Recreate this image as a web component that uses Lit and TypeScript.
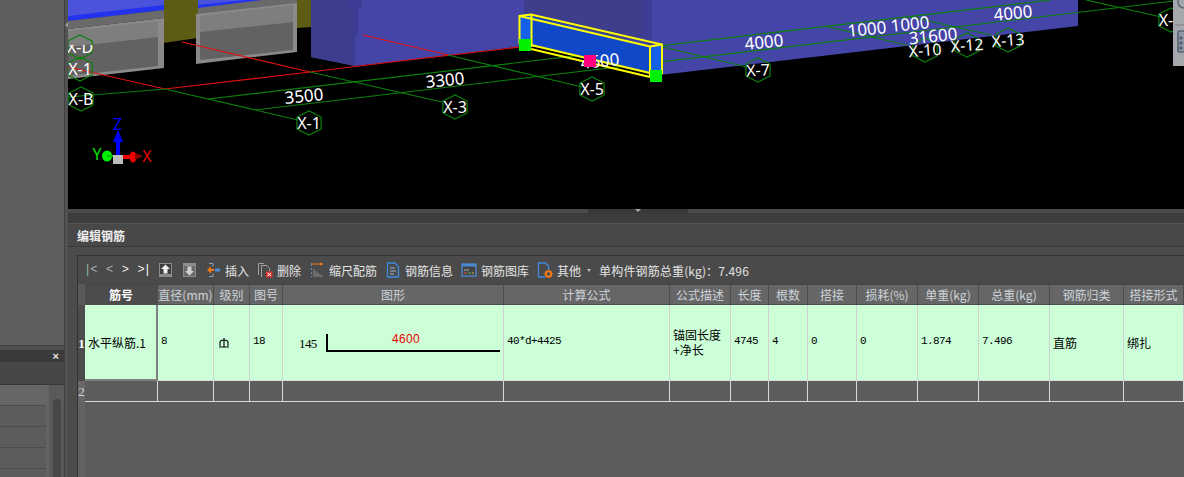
import { LitElement, html, svg, css } from 'lit';
import { customElement } from 'lit/decorators.js';

// grid-template for these widths lives in the .row rule
const COLUMNS = ['筋号', '直径(mm)', '级别', '图号', '图形', '计算公式', '公式描述', '长度', '根数', '搭接', '损耗(%)', '单重(kg)', '总重(kg)', '钢筋归类', '搭接形式'];

const GREEN_LINES = [
  [68, 97, 165, 89], [165, 89, 298, 120], [310, 72, 442, 102], [448, 55, 582, 87], [663, 47, 747, 67],
  [208, 99, 1051, 0], [255, 110, 1174, 1], [824, 26, 907, 45], [907, 16, 991, 35], [1086, 0, 1161, 17],
];

const BUBBLES = [
  { x: 80, y: 69, t: 'X-1', a: 0 }, { x: 81, y: 99, t: 'X-B', a: 0 },
  { x: 309, y: 123, t: 'X-1', a: 0 }, { x: 455, y: 107, t: 'X-3', a: 0 }, { x: 592, y: 89, t: 'X-5', a: 0 },
  { x: 758, y: 70, t: 'X-7', a: -3 }, { x: 925, y: 50, t: 'X-10', a: -4 }, { x: 967, y: 45, t: 'X-12', a: -4 },
  { x: 1008, y: 40, t: 'X-13', a: -4 },
];

const DIMENSIONS = [
  { x: 304, y: 96, t: '3500' }, { x: 445, y: 80, t: '3300' }, { x: 600, y: 61, t: '4600' },
  { x: 764, y: 42, t: '4000' }, { x: 867, y: 29, t: '1000' }, { x: 910, y: 24, t: '1000' },
  { x: 933, y: 36, t: '31600' }, { x: 1013, y: 13, t: '4000' },
];

const hexagon = (cx: number, cy: number) =>
  [0, 1, 2, 3, 4, 5]
    .map((i) => {
      const a = (Math.PI / 3) * i + Math.PI / 6;
      return `${(cx + 14 * Math.cos(a)).toFixed(1)},${(cy + 12 * Math.sin(a)).toFixed(1)}`;
    })
    .join(' ');

@customElement('app-root')
export class AppRoot extends LitElement {
  static styles = css`
    :host {
      display: flex;
      width: 100%;
      height: 477px;
      overflow: hidden;
      background: #4c4c4c;
      font-family: 'Noto Sans CJK SC', 'Noto Sans', sans-serif;
      font-size: 12px;
    }

    /* left dock */
    .side {
      width: 64px;
      flex: none;
      display: flex;
      flex-direction: column;
      background: #5c5c5c;
      border-right: 1px solid #404040;
      box-sizing: content-box;
    }
    .side-top {
      height: 345px;
      flex: none;
      border-bottom: 1px solid #434343;
      background: #5e5e5e;
    }
    .side-gap { height: 4px; flex: none; background: #505050; }
    .side-title {
      height: 12px;
      flex: none;
      background: #3b3b3b;
      display: flex;
      align-items: center;
      justify-content: flex-end;
      padding-right: 5px;
      color: #e8e8e8;
      font: bold 11px/12px 'Liberation Sans', sans-serif;
    }
    .side-tools {
      height: 22px;
      flex: none;
      background: #474747;
      border-bottom: 1px solid #363636;
    }
    .side-list { flex: 1; display: flex; min-height: 0; background: #5a5a5a; }
    .side-rows { width: 46px; flex: none; }
    .side-row { height: 20px; border-bottom: 1px solid #4c4c4c; background: #5c5c5c; }
    .side-row:first-child { background: #666; }
    .side-track { flex: 1; display: flex; justify-content: center; border-left: 3px solid #646464; }
    .side-thumb { width: 8px; height: 90px; margin-top: 14px; border-radius: 4px; background: #484848; }

    .sash { width: 3px; flex: none; background: #525252; display: flex; align-items: flex-start; }
    .sash i {
      display: block;
      margin-top: 22px;
      border: 3px solid transparent;
      border-right-color: #9a9a9a;
      border-left-width: 0;
    }

    /* main column */
    .main { flex: 1; min-width: 0; display: flex; flex-direction: column; }
    .scene { height: 209px; flex: none; display: block; background: #000; }
    .scene text { font-family: 'Noto Sans', sans-serif; fill: #fff; }
    .splitter { height: 4px; flex: none; background: #4a4a4a; display: flex; justify-content: center; }
    .grip {
      width: 100px;
      background: #383838;
      display: flex;
      justify-content: center;
      margin-left: 24px;
    }
    .grip i {
      display: block;
      border: 3px solid transparent;
      border-top-color: #a8a8a8;
      border-bottom-width: 0;
    }
    .band { height: 11px; flex: none; background: #3c3c3c; }
    .title {
      height: 22px;
      flex: none;
      background: #484848;
      border-top: 1px solid #555;
      border-bottom: 1px solid #383838;
      box-sizing: content-box;
      margin-top: -1px;
      padding-left: 9px;
      line-height: 24px;
      font-weight: 700;
      color: #eee;
    }
    .editor {
      flex: 1;
      min-height: 0;
      margin: 8px 0 0 9px;
      border-left: 1px solid #333;
      border-top: 1px solid #333;
      display: flex;
      flex-direction: column;
    }

    .toolbar {
      height: 28px;
      flex: none;
      display: flex;
      align-items: center;
      gap: 8px;
      padding-left: 6px;
      background: #4a4a4a;
      color: #e4e4e4;
      white-space: nowrap;
    }
    .nav {
      width: 66px;
      display: flex;
      justify-content: space-between;
      font: 12px/14px 'Liberation Mono', monospace;
      color: #e8e8e8;
    }
    .nav span { letter-spacing: -1px; }
    .nav b { font-weight: 400; color: #9fb89f; }
    .nav em { font-style: normal; color: #fff; }
    .nav .dim { color: #aaa; }
    .tool { display: flex; align-items: center; gap: 4px; }
    .tool svg { display: block; flex: none; }
    .caret {
      margin-left: 2px;
      border: 3px solid transparent;
      border-top-color: #bbb;
      border-bottom-width: 0;
      border-left-width: 2px;
      border-right-width: 2px;
    }
    .total { letter-spacing: 0.15px; }

    /* table */
    .table { flex: 1; min-height: 0; display: flex; background: #5c5c5c; }
    .gutter { width: 7px; flex: none; background: #626262; display: flex; flex-direction: column; }
    .g-head { height: 21px; background: #5a5a5a; }
    .g-one, .g-two {
      display: flex;
      align-items: center;
      justify-content: center;
      font: 13px/1 'Liberation Serif', serif;
    }
    .g-one { height: 76px; background: #4c4c4c; color: #fff; font-weight: 700; }
    .g-two { height: 21px; background: #686868; color: #c6d2de; }
    .rows { flex: 1; min-width: 0; }
    .row {
      display: grid;
      grid-template-columns: 73px 56px 36px 33px 221px 166px 61px 38px 39px 49px 61px 61px 71px 74px 1fr;
    }
    .head { height: 21px; }
    .head div {
      background: #666;
      border-right: 1px solid #4c4c4c;
      border-top: 1px solid #444;
      border-bottom: 1px solid #4c4c4c;
      box-sizing: border-box;
      text-align: center;
      line-height: 19px;
      color: #cdd4da;
      white-space: nowrap;
      overflow: hidden;
    }
    .head .current { background: #4c4c4c; color: #fff; font-weight: 700; }
    .data { height: 76px; background: #ccffd8; }
    .data > div {
      border-right: 1px solid #d0d0d0;
      border-bottom: 1px solid #d8d8d8;
      box-sizing: border-box;
      display: flex;
      align-items: center;
      padding: 0 0 2px 3px;
      color: #000;
      font: 11px/15px 'Liberation Mono', monospace;
      letter-spacing: -0.6px;
      min-width: 0;
    }
    .data > .cjk { font: 12px/15px 'Noto Sans CJK SC', sans-serif; letter-spacing: 0; padding-top: 1px; }
    .data > .selected {
      border: 2px solid #808080;
      border-top: 0;
      border-left: 0;
      padding-left: 3px;
      padding-bottom: 0;
      white-space: nowrap;
    }
    .data > .shape { padding: 0; }
    .data > .shape svg { display: block; }
    .data > .grade { padding: 0 0 0 4px; }
    .shape .bar-hook { font: 13px 'Liberation Serif', serif; }
    .shape .bar-main { font: 12px 'Liberation Sans', sans-serif; letter-spacing: 0.3px; }
    .empty { height: 21px; }
    .empty div { border-right: 1px solid #d8d8d8; border-bottom: 1px solid #d8d8d8; box-sizing: border-box; }
  `;

  private renderScene() {
    return html`<svg class="scene" width="1116" height="209" viewBox="68 0 1116 209">
      ${svg`
      <defs>
        <clipPath id="below-panel"><rect x="68" y="45" width="40" height="16"/></clipPath>
      </defs>
      <!-- building faces -->
      <polygon points="311,0 1078,0 1078,26 660,75 655,60 524,46 400,61 355,66 311,57" fill="#4545a8"/>
      <polygon points="311,0 355,0 355,66 311,57" fill="#3d3d90"/>
      <polygon points="524,0 645,0 645,38 524,46" fill="#3e3e8c"/>
      <polygon points="348,0 362,0 362,8 358,8 358,35 353,36 353,8 348,8" fill="#3c3c94"/>
      <polygon points="642,0 652,0 652,45 645,45" fill="#3d3d96"/>
      <polygon points="163,0 198,0 198,38 163,43" fill="#5e5b14"/>
      <polygon points="297,0 311,0 311,27 297,28" fill="#5e5b14"/>

      <!-- left wall panels -->
      <polygon points="68,0 164,0 164,10 68,21" fill="#4b52dc"/>
      <polygon points="68,16 164,5 164,10 68,21" fill="#2232ee"/>
      <polygon points="68,21 164,10 164,18 68,29" fill="#6a6a6a"/>
      <polygon points="68,29 164,18 164,68 68,79" fill="#8a8a8a"/>
      <polygon points="68,31 158,21 158,37 68,47" fill="#7e7e7e"/>
      <polygon points="68,47 158,37 158,66 68,76" fill="#626262"/>
      <polygon points="198,0 297,0 297,2 198,13" fill="#4b52dc"/>
      <polygon points="198,5 245,0 297,0 198,8" fill="#2232ee"/>
      <polygon points="198,8 262,0 297,0 297,6 198,17" fill="#6a6a6a"/>
      <polygon points="196,14 297,3 297,52 196,64" fill="#8a8a8a"/>
      <polygon points="200,16 293,5 293,22 200,32" fill="#7e7e7e"/>
      <polygon points="200,32 293,22 293,50 200,60" fill="#626262"/>

      <!-- grid lines -->
      <polyline points="68,67 165,89 310,72 400,61 607,37" fill="none" stroke="#e01010" stroke-width="1.2"/>
      <polyline points="182,42 310,72" fill="none" stroke="#e01010" stroke-width="1.2"/>
      <polyline points="363,35 448,55" fill="none" stroke="#e01010" stroke-width="1.2"/>
      ${GREEN_LINES.map(([a, b, c, d]) => svg`<line x1=${a} y1=${b} x2=${c} y2=${d} stroke="#0b800b" stroke-width="1.2"/>`)}
      <polygon points=${hexagon(80, 47)} fill="none" stroke="#0b800b" stroke-width="1.2"/>
      <text x="80" y="53" font-size="16" text-anchor="middle" clip-path="url(#below-panel)">X-D</text>
      ${BUBBLES.map((b) => svg`<polygon points=${hexagon(b.x, b.y)} fill="none" stroke="#0b800b" stroke-width="1.2"/>
        <text x=${b.x} y=${b.y + 6} font-size="16" text-anchor="middle" transform="rotate(${b.a} ${b.x} ${b.y})">${b.t}</text>`)}
      <polygon points=${hexagon(1171, 20)} fill="none" stroke="#0b800b" stroke-width="1.2"/>
      <text x="1166" y="26" font-size="16" text-anchor="middle">X-</text>

      <!-- selected beam -->
      <polygon points="532,16 650,46 650,74 532,46" fill="#1048c8"/>
      <polygon points="520,16 531,15 531,46 520,44" fill="#1560e8"/>
      <polygon points="650,46 661,45 661,74 650,74" fill="#1560e8"/>
      <g fill="none" stroke="#ffff00" stroke-width="2">
        <polyline points="519.5,44 519.5,16 531,14.5 662,44.5 662,74"/>
        <line x1="519.5" y1="16" x2="650" y2="46.5"/>
        <line x1="531.5" y1="15" x2="531.5" y2="47"/>
        <line x1="650" y1="46.5" x2="650" y2="76"/>
        <line x1="650" y1="46.5" x2="662" y2="44.5"/>
        <line x1="531" y1="45" x2="650" y2="73"/>
        <line x1="531" y1="49" x2="650" y2="77"/>
      </g>
      ${DIMENSIONS.map((d) => svg`<text x=${d.x} y=${d.y + 6} font-size="17" text-anchor="middle" transform="rotate(-6 ${d.x} ${d.y})">${d.t}</text>`)}
      <rect x="519" y="39" width="12" height="12" fill="#00f000"/>
      <rect x="650" y="70" width="12" height="12" fill="#00f000"/>
      <rect x="584" y="55" width="12" height="12" fill="#ff0080"/>

      <!-- axis triad -->
      <rect x="116" y="142" width="4" height="15" fill="#0000ff"/>
      <polygon points="113,142 118,130 123,142" fill="#0000ff"/>
      <ellipse cx="107" cy="156" rx="5" ry="5.5" fill="#00f000"/>
      <rect x="107" y="155" width="7" height="2" fill="#00c000"/>
      <rect x="122" y="155" width="12" height="4" fill="#f00000"/>
      <ellipse cx="133" cy="157" rx="3.5" ry="5.5" fill="#f00000"/>
      <polygon points="135,153 143,156 135,160" fill="#900000"/>
      <rect x="113" y="155" width="10" height="9" fill="#bcbcbc"/>
      <text x="117.500" y="130" font-size="16" text-anchor="middle" style="fill:#0000ff">Z</text>
      <text x="97" y="160" font-size="16" text-anchor="middle" style="fill:#00e000">Y</text>
      <text x="147" y="162" font-size="16" text-anchor="middle" style="fill:#f00000">X</text>

      <!-- docked palette at the right edge -->
      <rect x="1173" y="0" width="11" height="66" fill="#a4a8ac"/>
      <path d="M1184 8a6 6 0 0 1-6-6V0" fill="none" stroke="#4a5866" stroke-width="1.2"/>
      <line x1="1175" y1="25" x2="1184" y2="25" stroke="#7c8084"/>
      <path d="M1184 31h-5a1 1 0 0 0-1 1v19a1 1 0 0 0 1 1h5" fill="#8c98a6" stroke="#3c4c60" stroke-width="1.2"/>
      <path d="M1180 37h2v2h-2zM1180 42h2v2h-2zM1180 47h2v2h-2z" fill="none" stroke="#34445a" stroke-width="0.8"/>
      `}
    </svg>`;
  }

  private renderToolbar() {
    return html`<div class="toolbar">
      <div class="nav">
        <span><b>|</b><span class="dim">&lt;</span></span>
        <span class="dim">&lt;</span>
        <span>&gt;</span>
        <span>&gt;<em>|</em></span>
      </div>
      <svg width="16" height="16" viewBox="0 0 16 16">
        <rect x="1" y="1" width="13" height="14" fill="#8c8c8c"/>
        <rect x="2" y="2" width="11" height="10" fill="#3e3e3e"/>
        <path d="M7.5 2.500 12 7H9.500v4.500h-4V7H3z" fill="#f0f0f0"/>
      </svg>
      <svg width="15" height="16" viewBox="0 0 15 16">
        <rect x="1" y="1" width="13" height="14" fill="#8c8c8c"/>
        <rect x="2" y="4" width="11" height="10" fill="#6a6a6a"/>
        <path d="M7.500 13.500 3 9h2.500V4.500h4V9H12z" fill="#d0d0d0"/>
      </svg>
      <div class="tool">
        <svg width="16" height="16" viewBox="0 0 16 16">
          <path d="M4 1.500h4v3M4 14.500h4v-3" fill="none" stroke="#8aa0b8"/>
          <path d="M2 8l4-3.500V7h3v2H6v2.500z" fill="#f07818"/>
          <rect x="10" y="6.500" width="5" height="3" fill="#4a90d8"/>
        </svg>
        <span>插入</span>
      </div>
      <div class="tool">
        <svg width="16" height="16" viewBox="0 0 16 16">
          <path d="M1.500 13V1.500H7M4.500 15V3.500H10l2.500 3V9" fill="none" stroke="#a0a0a0"/>
          <rect x="9" y="9.500" width="6.500" height="6" fill="#d83030"/>
          <path d="M10.500 11l3.500 3M14 11l-3.500 3" stroke="#fff"/>
        </svg>
        <span>删除</span>
      </div>
      <div class="tool">
        <svg width="16" height="16" viewBox="0 0 16 16">
          <path d="M3 2h11" stroke="#f07818"/><path d="M11 .5 14 2 11 3.500z" fill="#f07818"/>
          <path d="M2.500 1v3M2.500 6v2M2.500 10v2M2.500 14v1" stroke="#6c8ab0"/>
          <path d="M5 7v8M7 9v6M9 10.500V15M11 12v3M13 13v2" stroke="#8c8c8c"/>
        </svg>
        <span>缩尺配筋</span>
      </div>
      <div class="tool">
        <svg width="16" height="16" viewBox="0 0 16 16">
          <path d="M2.500 1h7.500l3.500 3.500V15h-11z" fill="none" stroke="#3f8ade" stroke-width="1.300"/>
          <path d="M5 6h5M5 9h6M5 12h4" stroke="#9ab4d0"/>
        </svg>
        <span>钢筋信息</span>
      </div>
      <div class="tool">
        <svg width="16" height="16" viewBox="0 0 16 16">
          <rect x="1" y="2" width="14" height="12" fill="#444" stroke="#4a8ad0" stroke-width="1.300"/>
          <rect x="1" y="2" width="14" height="2.500" fill="#4a8ad0"/>
          <path d="M3 8h5" stroke="#b0b0b0"/>
          <path d="M3 11h3" stroke="#e05050"/><path d="M7 11h3" stroke="#50c050"/><path d="M11 11h2" stroke="#e0b040"/>
        </svg>
        <span>钢筋图库</span>
      </div>
      <div class="tool">
        <svg width="16" height="16" viewBox="0 0 16 16">
          <path d="M8 15H1.500V1h7l3 3v4" fill="none" stroke="#3f8ade" stroke-width="1.300"/>
          <circle cx="11.500" cy="12" r="2.700" fill="none" stroke="#f07818" stroke-width="2"/>
          <path d="M11.500 8v1.500M11.500 14.500V16M7.500 12H9M14 12h1.500M8.800 9.300l1 1M13.200 13.700l1 1M14.200 9.300l-1 1M9.800 13.700l-1 1" stroke="#f07818" stroke-width="1.300"/>
        </svg>
        <span>其他</span>
        <i class="caret"></i>
      </div>
      <span class="total">单构件钢筋总重(kg)：7.496</span>
    </div>`;
  }

  render() {
    return html`
      <aside class="side">
        <div class="side-top"></div>
        <div class="side-gap"></div>
        <div class="side-title">×</div>
        <div class="side-tools"></div>
        <div class="side-list">
          <div class="side-rows">
            ${[0, 1, 2, 3, 4].map(() => html`<div class="side-row"></div>`)}
          </div>
          <div class="side-track"><div class="side-thumb"></div></div>
        </div>
      </aside>
      <div class="sash"><i></i></div>
      <div class="main">
        ${this.renderScene()}
        <div class="splitter"><div class="grip"><i></i></div></div>
        <div class="band"></div>
        <div class="title">编辑钢筋</div>
        <div class="editor">
          ${this.renderToolbar()}
          <div class="table">
            <div class="gutter">
              <div class="g-head"></div>
              <div class="g-one">1</div>
              <div class="g-two">2</div>
            </div>
            <div class="rows">
              <div class="row head">
                ${COLUMNS.map((c, i) => html`<div class=${i === 0 ? 'current' : ''}>${c}</div>`)}
              </div>
              <div class="row data">
                <div class="cjk selected">水平纵筋.1</div>
                <div>8</div>
                <div class="grade">
                  <svg width="12" height="12" viewBox="0 0 12 12">
                    <path d="M6 1v9M2 9V5.500a4 2.500 0 0 1 8 0V9M1 10h10" fill="none" stroke="#000" stroke-width="1.100"/>
                  </svg>
                </div>
                <div>18</div>
                <div class="shape">
                  <svg width="220" height="75" viewBox="0 0 220 75">
                    <text class="bar-hook" x="16" y="43" fill="#000">145</text>
                    <path d="M44 29v17h173" fill="none" stroke="#000" stroke-width="2"/>
                    <text class="bar-main" x="109" y="38" fill="#f00000">4600</text>
                  </svg>
                </div>
                <div>40*d+4425</div>
                <div class="cjk">锚固长度<br />+净长</div>
                <div>4745</div>
                <div>4</div>
                <div>0</div>
                <div>0</div>
                <div>1.874</div>
                <div>7.496</div>
                <div class="cjk">直筋</div>
                <div class="cjk">绑扎</div>
              </div>
              <div class="row empty">
                ${COLUMNS.map(() => html`<div></div>`)}
              </div>
            </div>
          </div>
        </div>
      </div>
    `;
  }
}
